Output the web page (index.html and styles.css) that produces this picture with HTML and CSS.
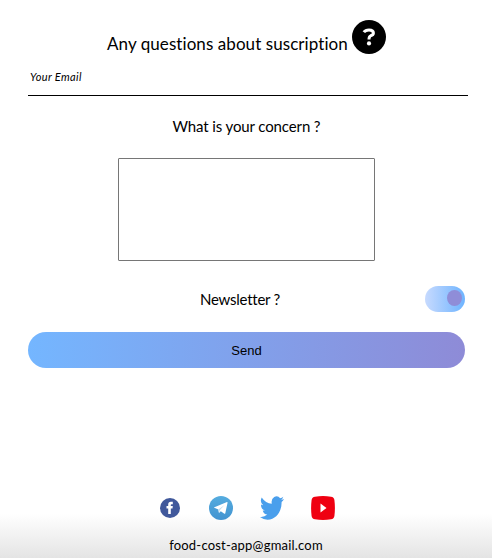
FILE: index.html
```
<!DOCTYPE html>
<html lang="en">
<head>
<meta charset="utf-8">
<title>Contact</title>
<link rel="stylesheet" href="styles.css">
</head>
<body>
<form class="contact">
  <header class="heading">
    <h1>Any questions about suscription</h1>
    <svg class="help" viewBox="0 0 34 34" aria-hidden="true"><circle cx="17" cy="17" r="17"/><path d="M11.8 12.2Q13.4 9.9 17 9.9Q21.4 9.9 21.4 13Q21.4 15 18.6 15.8Q17 16.4 17 19.5" fill="none" stroke="#fff" stroke-width="3"/><circle cx="17" cy="23.4" r="2.1" fill="#fff"/></svg>
  </header>
  <input class="email" type="email" placeholder="Your Email" aria-label="Your Email">
  <label class="concern" for="message">What is your concern ?</label>
  <textarea class="message" id="message"></textarea>
  <div class="newsletter">
    <span class="question">Newsletter ?</span>
    <span class="toggle"><span class="knob"></span></span>
  </div>
  <button class="send" type="button">Send</button>
</form>
<footer class="footer">
  <div class="social">
    <svg class="facebook" viewBox="0 0 20 20"><circle cx="10" cy="10" r="10" fill="#40589b"/><path d="M8.2 16V10.6H6.5V8.1H8.2V6.4Q8.2 3.8 10.9 3.8H12.8V6.3H11.6Q10.8 6.3 10.8 7.1V8.1H12.8L12.5 10.6H10.8V16Z" fill="#fff"/></svg>
    <svg class="telegram" viewBox="0 0 24 24"><defs><linearGradient id="sky" x2="0" y2="1"><stop stop-color="#55acdf"/><stop offset="1" stop-color="#4293d0"/></linearGradient></defs><circle cx="12" cy="12" r="12" fill="url(#sky)"/><path d="M4.8 11.5L18 6.1Q18.8 6 18.5 7L16.3 17.2Q16 18.3 15 17.6L11.8 15.2L10 17L9.3 13.4Z" fill="#fff"/><path d="M9.3 13.4L15.6 8.9L10.8 14.2L10 17Z" fill="#c5dff0"/></svg>
    <svg class="twitter" viewBox="0 2 24 20" preserveAspectRatio="none"><path d="M24 4.6a10 10 0 0 1-2.8.8 5 5 0 0 0 2.1-2.7 10 10 0 0 1-3.1 1.2 4.9 4.9 0 0 0-8.4 4.5A14 14 0 0 1 1.7 3.2a4.9 4.9 0 0 0 1.5 6.5 5 5 0 0 1-2.2-.6 4.9 4.9 0 0 0 3.9 4.9 5 5 0 0 1-2.2.1 4.9 4.9 0 0 0 4.6 3.4A10 10 0 0 1 0 19.5a14 14 0 0 0 7.6 2.2c9.1 0 14.3-7.7 14-14.6A10 10 0 0 0 24 4.6z" fill="#4a9fec"/></svg>
    <svg class="youtube" viewBox="0 0 24 24"><path d="M4 .8Q12-.6 20 .8Q23 1 23.4 4Q24.4 12 23.4 20Q23 23 20 23.3Q12 24.5 4 23.3Q1 23 .6 20Q-.4 12 .6 4Q1 1 4 .8Z" fill="#ef0011"/><path d="M9.5 7.5V16.5L15.5 12Z" fill="#fff"/></svg>
  </div>
  <span class="address">food-cost-app@gmail.com</span>
</footer>
</body>
</html>
```
FILE: styles.css
```
* { box-sizing: border-box; }
body {
  margin: 0;
  height: 558px;
  overflow: hidden;
  display: flex;
  flex-direction: column;
  justify-content: space-between;
  background: #fff;
  color: #000;
  font-family: Lato, sans-serif;
}
.contact { display: flex; flex-direction: column; padding: 20px 24px 0 28px; }
.heading { display: flex; padding-left: 79px; height: 35px; }
h1 { margin: 13px 0 0; width: 245px; font-size: 17px; line-height: 22px; font-weight: 400; letter-spacing: .07px; white-space: nowrap; }
.help { width: 34px; height: 34px; }
.email { width: 440px; height: 41px; border: 0; border-bottom: 1px solid #000; padding: 3px 2px 0; background: none; font: italic 11px Lato, sans-serif; letter-spacing: .38px; outline: 0; }
.email::placeholder { color: #000; opacity: 1; }
.concern { margin: 20px 3px 1px 0; align-self: center; font-size: 15px; line-height: 20px; letter-spacing: -.12px; }
.message { width: 257px; height: 103px; margin: 21px 0 0 90px; border: 1px solid #767676; border-radius: 1px; resize: none; }
.newsletter { display: flex; align-items: center; width: 437px; height: 26px; margin-top: 25px; padding-left: 172px; justify-content: space-between; }
.question { font-size: 15px; line-height: 20px; letter-spacing: -.25px; }
.toggle { width: 40px; height: 26px; padding: 4px 3px 0 22px; border-radius: 13px; background: linear-gradient(90deg, #c7dafe, #6eb4ff); }
.knob { display: block; width: 15px; height: 16px; border-radius: 50%; background: #8f8dd8; }
.send { width: 437px; height: 36px; margin-top: 20px; padding: 0; border: 0; border-radius: 18px; background: linear-gradient(90deg, #74b6ff, #8e8bd7); color: #000; font: 13px "Liberation Sans", sans-serif; }
.footer { height: 68px; display: flex; flex-direction: column; align-items: center; background: linear-gradient(#fff 35%, #e4e4e4); }
.social { display: flex; align-items: center; width: 175px; height: 24px; margin: 6px 0 0 3px; }
.facebook { width: 20px; height: 20px; margin-right: 29px; }
.telegram, .twitter, .youtube { width: 24px; height: 24px; }
.telegram { margin-right: 27px; }
.twitter { margin-right: 27px; }
.address { margin-top: 16px; font-size: 13px; line-height: 18px; letter-spacing: .2px; }
```
